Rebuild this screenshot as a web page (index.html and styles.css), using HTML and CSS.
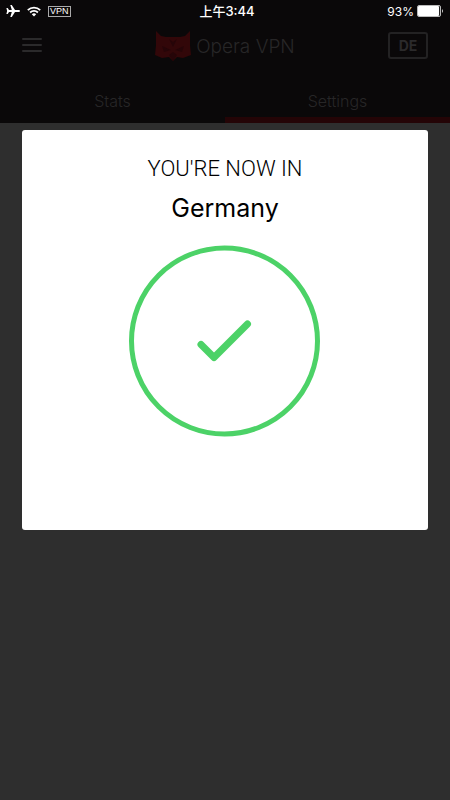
FILE: index.html
```html
<!DOCTYPE html>
<html lang="en">
<head>
<meta charset="utf-8">
<meta name="viewport" content="width=device-width, initial-scale=1">
<title>Opera VPN</title>
<link rel="stylesheet" href="styles.css">
</head>
<body>
<header class="top">
  <div class="status">
    <div class="status-left">
      <svg width="14" height="14" viewBox="0 0 14 14" fill="#fff" aria-hidden="true"><path d="M14 7c0 .6-.7 1-1.500 1H9L5.800 13H4.300L5.800 8H3L1.700 10H.4L1.100 7 .4 4h1.300L3 6h2.800L4.300 1h1.500L9 6h3.500c.8 0 1.500.4 1.500 1z"/></svg>
      <svg width="14" height="11" viewBox="0 0 14 11" fill="none" stroke="#fff" stroke-width="1.800" aria-hidden="true"><path d="M.8 4.100a9 9 0 0 1 12.400 0M3.100 6.500a5.600 5.600 0 0 1 7.800 0"/><path d="M7 10.600 4.800 8.300a3.200 3.200 0 0 1 4.400 0z" fill="#fff" stroke="none"/></svg>
      <span class="vpn">VPN</span>
    </div>
    <span class="clock">上午3:44</span>
    <div class="status-right">
      <span>93%</span>
      <svg width="27" height="12" viewBox="0 0 27 12" aria-hidden="true"><rect x=".5" y=".5" width="23" height="11" rx="1.500" fill="#222" stroke="#bbb"/><rect x="1" y="1" width="21" height="10" rx="1" fill="#fff"/><path d="M25 4q2 2 0 4z" fill="#ccc"/></svg>
    </div>
  </div>
  <div class="bar">
    <button class="menu" type="button" aria-label="Menu"><svg width="20" height="16" viewBox="0 0 20 16" stroke="#2b2a2b" stroke-width="2" stroke-linecap="round"><path d="M1 2h18M1 8h18M1 14h18"/></svg></button>
    <div class="brand">
      <svg width="36" height="32" viewBox="0 0 36 32" aria-hidden="true"><path fill="#320709" d="M1 1 6 6l5 1h14l5-1 5-5v14l1 10-8 3-6-1-4 4-4-4-7 1-7-3 1-10z"/><path fill="#260508" d="M7 16l9 4-7 2zM29 16l-9 4 7 2zM14 9l4 3 4-3-4 8zM14 25l4-3 4 3-4 6z"/></svg>
      <span>Opera VPN</span>
    </div>
    <button class="country" type="button">DE</button>
  </div>
  <nav class="tabs">
    <a href="#stats">Stats</a>
    <a href="#settings" class="active">Settings</a>
  </nav>
</header>
<main class="content">
  <section class="dialog" role="dialog" aria-labelledby="place">
    <p class="lead">YOU'RE NOW IN</p>
    <h1 class="place" id="place">Germany</h1>
    <svg class="check" width="192" height="192" viewBox="0 0 192 192" fill="none" stroke="#4cd267" role="img" aria-label="Connected"><circle cx="95.500" cy="96" r="93" stroke-width="5"/><path d="M72 99.500 85 112.500 118.500 79" stroke-width="7" stroke-linecap="round" stroke-linejoin="round"/></svg>
  </section>
</main>
</body>
</html>
```
FILE: styles.css
```css
* { box-sizing: border-box; }
body {
  margin: 0;
  min-height: 100vh;
  background: #2e2e2e;
  font-family: Inter, "Noto Sans CJK SC", sans-serif;
}
button { padding: 0; background: none; border: 0; font: inherit; }
.top { background: #0a0809; color: #272627; }
.status {
  display: grid;
  grid-template-columns: 1fr auto 1fr;
  align-items: center;
  height: 22px;
  padding: 0 6px;
  color: #fff;
  font-size: 12px;
}
.status-left, .status-right { display: flex; align-items: center; gap: 7px; }
.status-right { justify-content: flex-end; gap: 3px; }
.vpn {
  padding: 0 1px;
  border: 1px solid #aaa;
  font-family: "Liberation Sans", sans-serif;
  font-size: 9px;
  line-height: 9px;
}
.clock { padding-left: 4px; font-size: 13px; font-weight: 500; line-height: 18px; }
.bar {
  display: grid;
  grid-template-columns: 1fr auto 1fr;
  align-items: center;
  height: 46px;
  padding: 0 22px;
}
.menu { display: flex; justify-self: start; }
.brand {
  display: flex;
  align-items: center;
  gap: 5px;
  padding-top: 2px;
  font-size: 19px;
  font-weight: 300;
}
.country {
  justify-self: end;
  width: 40px;
  height: 27px;
  border: 2px solid #232223;
  border-radius: 3px;
  color: #2b2a2b;
  font-size: 14px;
  font-weight: 700;
}
.tabs { display: grid; grid-template-columns: 1fr 1fr; }
.tabs a {
  height: 55px;
  padding-top: 20px;
  border-bottom: 6px solid transparent;
  color: #272627;
  font-size: 16px;
  font-weight: 300;
  line-height: 26px;
  text-align: center;
  text-decoration: none;
}
.tabs .active { border-bottom-color: #240406; }
.content { padding: 7px 22px; }
.dialog {
  display: flex;
  flex-direction: column;
  align-items: center;
  padding: 24px 16px 93px;
  border-radius: 3px;
  background: #fff;
  color: #000;
}
.lead {
  margin: 0 0 8px;
  font-family: Roboto, sans-serif;
  font-size: 22px;
  font-weight: 300;
  line-height: 30px;
}
.place { margin: 0 0 21px; font-size: 25px; font-weight: 400; line-height: 32px; }
.check { display: block; }
```
